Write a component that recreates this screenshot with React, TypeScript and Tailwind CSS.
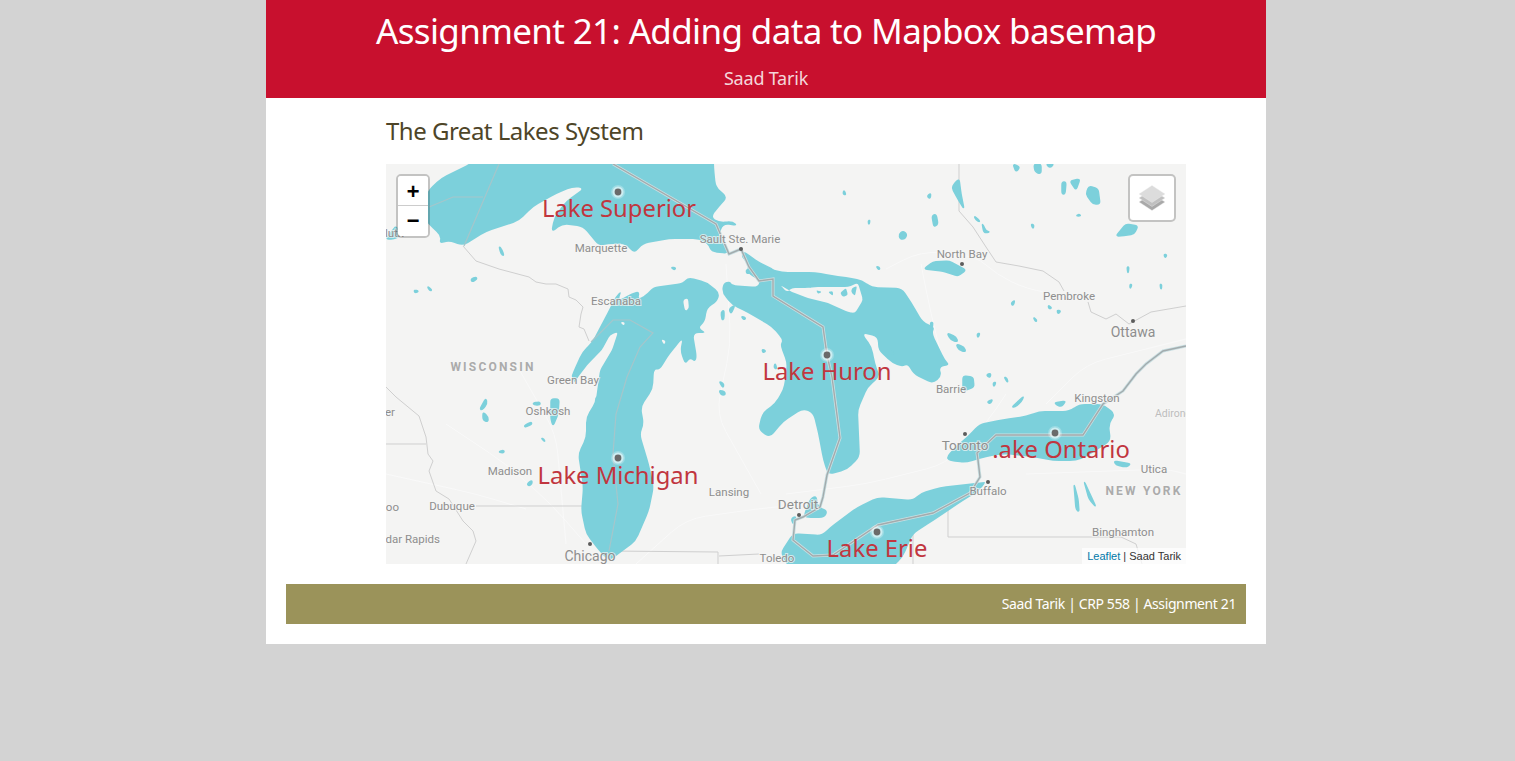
// App.tsx
import React from "react";

const SUPERIOR =
  "95,-8 83,0 55,14 42,26 36,50 42,60 55,72 53,80 63,77 77,82 100,68 133,57 147,43 170,30 187,23 198,24 180,37 168,53 165,69 177,60 197,63 213,82 222,80 240,80 248,90 257,80 283,75 313,75 322,80 325,88 343,90 340,80 333,72 337,60 352,62 347,57 333,58 325,53 333,43 342,33 330,23 328,3 328,-8";
const MICHIGAN =
  "223,397 213,387 200,370 195,347 197,323 192,290 200,273 200,253 210,237 208,227 195,225 185,214 187,208 196,188 206,178 224,144 229,133 236,126 232,137 246,129 254,127 252,136 262,129 267,123 297,119 302,113 321,118 334,129 331,138 321,144 319,158 312,164 321,169 307,169 311,193 309,198 304,194 299,201 294,186 297,174 287,186 281,194 274,206 268,205 267,225 255,243 258,260 254,270 263,300 268,323 263,347 250,377 233,390";
const DOOR_PENINSULA = "232,168 224,171 216,186 203,199 192,213 185,225 210,235 214,206 226,186";
const HURON =
  "337,119 344,117 346,121 372,123 374,116 368,108 372,101 396,108 429,108 446,111 466,114 476,116 486,123 516,124 526,139 537,158 549,163 546,169 559,196 564,201 553,203 556,212 547,220 527,210 522,200 516,203 506,199 492,186 492,173 476,169 486,183 489,199 494,213 482,223 472,246 474,293 461,306 442,311 437,296 432,269 427,249 417,245 397,258 384,274 372,266 376,249 389,239 397,226 399,216 401,199 394,181 397,176 386,163 362,149 346,141 336,129";
const MANITOULIN =
  "394,121 401,128 406,124 422,124 429,123 442,123 462,123 472,119 477,136 469,149 462,148 442,139 422,134 406,128";
const ONTARIO =
  "560,293 570,282 582,272 593,260 617,255 640,252 653,247 683,247 693,240 717,240 730,250 723,260 725,277 700,293 690,297 667,297 647,293 617,290 600,293 580,299 563,297";
const ERIE =
  "407,410 394,389 407,369 436,371 444,363 471,343 492,333 527,336 534,329 554,323 597,318 600,318 593,327 577,337 547,357 527,370 517,393 500,410";
const ST_CLAIR = "424,334 431,331 432,343 442,346 439,354 424,354 417,353";

const SMALL_WATER = [
  "538,105 547,98 563,97 580,106 572,112 557,107",
  "568,20 573,15 575,30 578,45 572,35 566,24",
  "577,212 587,213 588,223 577,227",
  "688,320 692,335 693,348 690,345",
  "698,317 710,343 703,335",
  "728,297 745,300 740,303 730,301",
  "165,235 173,235 172,250 167,262 165,255",
  "97,248 102,253 102,258 97,256",
  "94,245 100,234 101,240 96,246",
  "138,262 145,258 146,260 140,263",
  "147,239 154,238 154,241 148,241",
  "112,288 118,286 118,289",
  "141,320 146,316 146,320 143,322",
  "155,274 158,275 159,278",
  "333,217 338,220 337,224",
  "333,226 339,228 339,231 335,231",
  "113,82 116,86 118,92 115,90",
  "85,115 90,113 91,115 86,118",
  "41,122 46,126 44,127",
  "28,126 33,127 29,129",
  "285,103 290,104 288,106",
  "0,75 10,62 14,72 8,75",
  "356,92 363,100 362,108 370,114 376,108 390,115 388,106 372,98 358,88",
  "458,26 460,31 457,30",
  "482,57 484,56 483,61",
  "541,32 545,29 544,35",
  "546,52 550,50 552,60 548,63",
  "513,70 517,67 521,70 519,75 514,75",
  "588,52 592,55 594,58 590,56",
  "596,59 600,67 604,68 598,69",
  "645,60 648,61 647,65",
  "676,18 680,18 679,30 676,30",
  "684,17 694,15 690,26",
  "703,22 712,25 714,40 707,40 700,30",
  "690,52 695,52 693,50",
  "730,72 740,60 752,62 748,70 735,72",
  "778,90 781,91 779,94",
  "741,103 743,103 742,110",
  "744,120 746,121 744,125",
  "774,120 776,121 775,126",
  "625,139 629,136 627,142",
  "662,141 666,144 663,145",
  "671,146 675,147 672,150",
  "647,153 651,156 650,158",
  "490,102 494,104 493,106",
  "561,169 570,173 572,178 565,176",
  "570,180 578,183 580,188 573,186",
  "591,170 594,169 592,174",
  "544,159 547,158 546,165",
  "600,211 605,209 604,214",
  "618,213 621,214 622,219",
  "607,219 610,218 608,223",
  "601,238 607,235 604,240",
  "626,243 638,232 635,238 629,243",
  "668,239 680,237 675,243",
  "360,106 366,104 367,108 361,110",
  "335,148 338,146 338,155 336,156",
  "343,145 349,141 345,150",
  "355,152 360,154 358,156",
  "376,185 380,187 377,189",
  "389,199 391,205 388,204",
  "505,186 508,189 506,191",
  "648,0 655,0 655,10 649,8",
  "627,0 634,3 630,8",
  "660,0 668,0 664,4",
  "510,363 512,364 514,368 512,368",
  "405,355 410,352 408,361",
];

// islands drawn over the lakes
const ISLANDS = [
  MANITOULIN,
  DOOR_PENINSULA,
  "297,136 302,134 303,145 299,147",
  "234,158 239,158 238,162",
  "275,175 280,177 278,181",
  "226,178 228,177 227,182",
];

const MANITOULIN_WATER = [
  "416,122 424,120 426,124",
  "436,121 444,117 446,122",
  "442,128 447,127 447,132",
  "454,129 460,124 462,131 457,133",
  "466,124 471,122 469,132 465,128",
  "430,126 436,128 432,130",
];

const BORDERS_LAND = [
  "77,82 90,97 113,105 143,113 150,118 160,120 170,120 182,125 183,133 190,136 197,143 195,150 193,163 198,165 203,177",
  "0,223 10,233 33,252 40,273 42,290 47,297 43,307 50,327 63,335 77,357 87,367 90,377 80,400",
  "90,342 232,342",
  "223,387 332,388 332,400",
  "333,392 373,390",
  "0,280 40,280",
  "573,0 573,47 587,63 600,83 610,98 633,102 657,107 673,118 678,127",
  "702,138 705,148 720,155 730,150 743,160 765,148 800,142",
  "562,335 562,373 735,373 750,380 756,400",
  "527,345 527,400",
];

const BORDERS_LAKE = [
  "113,0 78,82",
  "43,43 67,33 97,33",
  "205,178 227,156 244,156 267,169 254,183 241,213 230,250 227,290 232,340 223,387",
];

const CANADA_LINE =
  "227,0 330,60 343,90 355,85 363,103 373,117 387,115 387,132 437,163 441,191 446,213 454,274 441,311 437,333 434,343 417,353 409,356 407,376 427,392 447,391 492,361 547,349 584,329 594,313 592,296 591,289 610,271 697,271 717,240 737,227 750,210 760,200 777,187 800,182";

const ROADS = [
  "500,105 535,87 590,92 610,110 640,125 700,135",
  "535,100 545,150 555,190",
  "620,230 600,260 560,300 480,320 400,330",
  "640,310 780,305 800,310",
  "60,260 120,300 165,340 200,380",
  "250,400 300,355 370,345 420,340",
  "340,100 345,180 330,250 375,330",
  "130,200 170,270 180,380",
  "660,240 700,200 740,190 800,175",
  "0,310 90,330 140,345",
];

// rounds the corners of a "x,y x,y" list so coastlines don't look like polygons
const roundedPath = (points: string, radius: number, closed = true): string => {
  const p = points.split(" ").map((s) => s.split(",").map(Number));
  const n = p.length;
  const toward = (a: number[], b: number[], d: number) => {
    const len = Math.hypot(b[0] - a[0], b[1] - a[1]) || 1;
    const t = Math.min(d, len / 2) / len;
    return [a[0] + (b[0] - a[0]) * t, a[1] + (b[1] - a[1]) * t];
  };
  let d = closed ? "" : `M${p[0][0]},${p[0][1]} `;
  const from = closed ? 0 : 1;
  const to = closed ? n : n - 1;
  for (let i = from; i < to; i++) {
    const cur = p[i];
    const prev = p[(i - 1 + n) % n];
    const next = p[(i + 1) % n];
    const a = toward(cur, prev, radius);
    const b = toward(cur, next, radius);
    d += `${d === "" ? "M" : "L"}${a[0]},${a[1]} Q${cur[0]},${cur[1]} ${b[0]},${b[1]} `;
  }
  return closed ? `${d}Z` : `${d}L${p[n - 1][0]},${p[n - 1][1]}`;
};

type Label = { text: string; x: number; y: number; size?: number; anchor?: "start" | "middle" | "end" };

const PLACE_LABELS: Label[] = [
  { text: "Sault Ste. Marie", x: 354, y: 79 },
  { text: "Marquette", x: 215, y: 88 },
  { text: "Escanaba", x: 230, y: 141 },
  { text: "North Bay", x: 576, y: 94 },
  { text: "Pembroke", x: 683, y: 136 },
  { text: "Ottawa", x: 747, y: 173, size: 14 },
  { text: "Green Bay", x: 187, y: 220 },
  { text: "Oshkosh", x: 162, y: 251 },
  { text: "Madison", x: 124, y: 311 },
  { text: "Dubuque", x: 66, y: 346 },
  { text: "Cedar Rapids", x: 54, y: 379, anchor: "end" },
  { text: "Waterloo", x: 13, y: 347, anchor: "end" },
  { text: "Rochester", x: 9, y: 252, anchor: "end" },
  { text: "Duluth", x: -15, y: 73, anchor: "start" },
  { text: "Chicago", x: 204, y: 397, size: 14 },
  { text: "Lansing", x: 343, y: 332 },
  { text: "Detroit", x: 412, y: 345, size: 13.5 },
  { text: "Toledo", x: 391, y: 398 },
  { text: "Toronto", x: 579, y: 286, size: 13.5 },
  { text: "Barrie", x: 565, y: 229 },
  { text: "Kingston", x: 711, y: 238 },
  { text: "Buffalo", x: 602, y: 331 },
  { text: "Utica", x: 768, y: 309 },
  { text: "Binghamton", x: 737, y: 372 },
];

const LAKE_LABELS: Label[] = [
  { text: "Lake Superior", x: 233, y: 53 },
  { text: "Lake Huron", x: 441, y: 216 },
  { text: "Lake Michigan", x: 232, y: 320 },
  { text: ".ake Ontario", x: 675, y: 294 },
  { text: "Lake Erie", x: 491, y: 393 },
];

const MARKERS = [
  [232, 28],
  [441, 191],
  [232, 294],
  [669, 269],
  [491, 368],
];

const CITY_DOTS = [
  [355, 85],
  [576, 100],
  [747, 157],
  [579, 270],
  [602, 318],
  [413, 351],
  [204, 380],
];

const GreatLakesMap: React.FC = () => (
  <svg viewBox="0 0 800 400" width={800} height={400} className="block">
    <rect width={800} height={400} fill="#f4f4f3" />

    {ROADS.map((pts) => (
      <path key={pts} d={roundedPath(pts, 20, false)} fill="none" stroke="#f9f9f9" strokeWidth={1} />
    ))}

    {BORDERS_LAND.map((pts) => (
      <polyline key={pts} points={pts} fill="none" stroke="#cfcfcf" strokeWidth={1} />
    ))}

    <g fill="#7cd0db">
      {[SUPERIOR, MICHIGAN, HURON, ONTARIO, ERIE, ST_CLAIR].map((pts) => (
        <path key={pts} d={roundedPath(pts, 6)} />
      ))}
    </g>
    <g fill="#7cd0db" stroke="#7cd0db" strokeWidth={1.5} strokeLinejoin="round">
      {SMALL_WATER.map((pts) => (
        <path key={pts} d={roundedPath(pts, 3)} />
      ))}
    </g>

    <g fill="#f4f4f3">
      {ISLANDS.map((pts) => (
        <path key={pts} d={roundedPath(pts, 3)} />
      ))}
    </g>
    <g fill="#7cd0db">
      {MANITOULIN_WATER.map((pts) => (
        <path key={pts} d={roundedPath(pts, 2)} />
      ))}
    </g>

    {BORDERS_LAKE.map((pts) => (
      <polyline key={pts} points={pts} fill="none" stroke="#a5c6cb" strokeWidth={1.2} />
    ))}
    <polyline points={CANADA_LINE} fill="none" stroke="#c9dfe2" strokeWidth={3} />
    <polyline points={CANADA_LINE} fill="none" stroke="#a3abad" strokeWidth={1.4} />

    {CITY_DOTS.map(([cx, cy]) => (
      <circle key={cx} cx={cx} cy={cy} r={2} fill="#5c5c5c" />
    ))}

    <g
      fontFamily="Roboto, sans-serif"
      fill="#8e8e8e"
      stroke="#f6f6f5"
      strokeOpacity={0.7}
      strokeWidth={2}
      style={{ paintOrder: "stroke" }}
    >
      {PLACE_LABELS.map((l) => (
        <text key={l.text} x={l.x} y={l.y} fontSize={l.size ?? 11.5} textAnchor={l.anchor ?? "middle"}>
          {l.text}
        </text>
      ))}
      <text x={107} y={207} fontSize={12} fontWeight={700} letterSpacing={2.2} fill="#ababab" textAnchor="middle">
        WISCONSIN
      </text>
      <text x={758} y={331} fontSize={12} fontWeight={700} letterSpacing={2.2} fill="#ababab" textAnchor="middle">
        NEW YORK
      </text>
      <text x={769} y={253} fontSize={10.5} fill="#bdbdbd">
        Adirondack
      </text>
    </g>

    {MARKERS.map(([cx, cy]) => (
      <g key={cx + cy}>
        <circle cx={cx} cy={cy} r={7} fill="#ffffff" fillOpacity={0.25} />
        <circle cx={cx} cy={cy} r={5.5} fill="#ffffff" fillOpacity={0.5} />
        <circle cx={cx} cy={cy} r={3.4} fill="#6a6a6a" />
      </g>
    ))}

    <g fontFamily="'Noto Sans', sans-serif" fontSize={23.8} fill="#c1363f" textAnchor="middle">
      {LAKE_LABELS.map((l) => (
        <text key={l.text} x={l.x} y={l.y}>
          {l.text}
        </text>
      ))}
    </g>
  </svg>
);

const LayersIcon: React.FC = () => (
  <svg viewBox="0 0 26 26" width={26} height={26}>
    <polygon points="13,8.5 26,17 13,25.5 0,17" fill="#a9a9a9" stroke="#eeeeee" strokeWidth={0.4} />
    <polygon points="13,4.5 26,13 13,21.5 0,13" fill="#c0c0c0" stroke="#eeeeee" strokeWidth={0.4} />
    <polygon points="13,0.5 26,9 13,17.5 0,9" fill="#dcdcdc" stroke="#eeeeee" strokeWidth={0.4} />
  </svg>
);

const ZoomControl: React.FC = () => (
  <div className="absolute left-2.5 top-2.5 rounded-[5px] border-2 border-black/20 bg-clip-padding">
    <div className="flex h-[30px] w-[30px] items-center justify-center rounded-t-[3px] border-b border-[#cccccc] bg-white pt-[5px] font-['Liberation_Mono',monospace] text-[22px] font-bold text-black">
      +
    </div>
    <div className="flex h-[30px] w-[30px] items-center justify-center rounded-b-[3px] bg-white pt-[3px] font-['Liberation_Mono',monospace] text-[22px] font-bold text-black">
      −
    </div>
  </div>
);

const App: React.FC = () => (
  <div className="min-h-[761px] bg-[#d3d3d3] font-['Noto_Sans',sans-serif]">
    <div className="ml-[266px] w-[1000px] bg-white">
      <header className="h-[98px] bg-[#c8102e] text-center">
        <h1 className="pt-[6px] text-[35px] leading-[50px] tracking-[-0.65px] text-white">
          Assignment 21: Adding data to Mapbox basemap
        </h1>
        <p className="pt-[10px] text-[18px] leading-[24px] tracking-[-0.2px] text-[#f4d6da]">Saad Tarik</p>
      </header>

      <main className="px-[120px] pt-[16px]">
        <h2 className="h-[50px] text-[24px] leading-[34px] tracking-[-0.5px] text-[#4e4528]">The Great Lakes System</h2>
        <div className="relative h-[400px] w-[800px] overflow-hidden">
          <GreatLakesMap />
          <ZoomControl />
          <div className="absolute right-2.5 top-2.5 flex h-[48px] w-[48px] items-center justify-center rounded-[5px] border-2 border-black/20 bg-white bg-clip-padding">
            <LayersIcon />
          </div>
          <div className="absolute bottom-0 right-0 bg-white/70 px-[5px] font-['Liberation_Sans',sans-serif] text-[11px] leading-[16px] text-[#333333]">
            <span className="text-[#0078a8]">Leaflet</span> | Saad Tarik
          </div>
        </div>
      </main>

      <div className="px-5 py-5">
        <footer className="h-10 bg-[#9b935a] pr-[10px] text-right text-[14px] leading-10 tracking-[-0.39px] text-white">
          Saad Tarik | CRP 558 | Assignment 21
        </footer>
      </div>
    </div>
  </div>
);

export default App;
